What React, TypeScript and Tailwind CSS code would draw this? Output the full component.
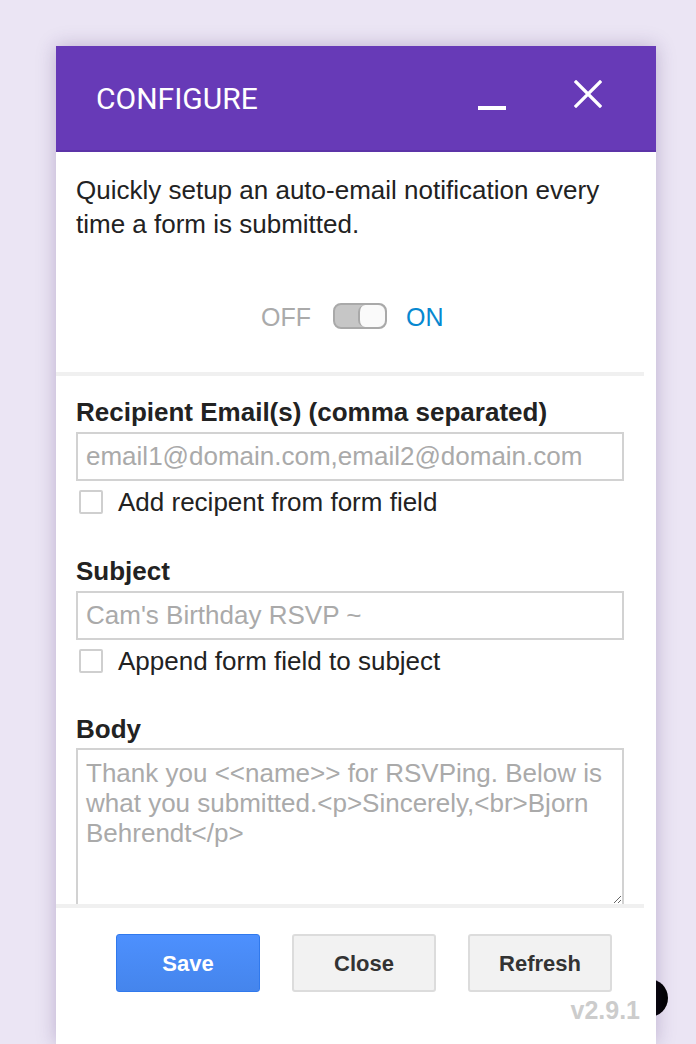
import React from "react";

function Field({
  label,
  placeholder,
  checkLabel,
  first = false,
}: {
  label: string;
  placeholder: string;
  checkLabel: string;
  first?: boolean;
}) {
  return (
    <div className={first ? "" : "mt-[39px]"}>
      <div className="text-[26px] leading-[30px] font-bold text-[#222]">{label}</div>
      <input
        readOnly
        placeholder={placeholder}
        className="mt-[5px] block w-[548px] h-[49px] border-2 border-[#d2d2d2] px-[8px] text-[26px] text-[#222] placeholder:text-[#aaa] outline-none"
      />
      <div className="mt-[6px] h-[30px] flex items-center">
        <div className="ml-[3px] w-[24px] h-[24px] border-2 border-[#cfcfcf] rounded-[2px] bg-white" />
        <span className="ml-[15px] text-[26px] leading-[30px] text-[#222]">{checkLabel}</span>
      </div>
    </div>
  );
}

export default function App() {
  return (
    <div className="relative min-h-screen overflow-hidden bg-[#ebe5f4] font-['Liberation_Sans',Arial,sans-serif]">
      {/* dark dot peeking out from behind the panel */}
      <div className="absolute left-[630px] top-[979px] w-[38px] h-[38px] rounded-full bg-black" />

      <div className="pt-[46px] pl-[56px]">
        <div className="relative z-10 w-[600px] h-[998px] bg-white shadow-[0_0_18px_rgba(70,40,110,0.28)] flex flex-col">
          <div className="h-[106px] shrink-0 bg-[#673ab7] border-b-2 border-[#5c34a8] flex items-center pl-[40px] pr-[54px]">
            <h1 className="font-['Roboto',sans-serif] text-[30px] text-white">CONFIGURE</h1>
            <div className="ml-auto flex items-center">
              <div className="mt-[20px] w-[28px] h-[4px] bg-white" />
              <svg className="ml-[68px] mb-[9px]" width="28" height="28" viewBox="0 0 28 28">
                <path d="M2 2 L26 26 M26 2 L2 26" stroke="white" strokeWidth="3.2" strokeLinecap="square" />
              </svg>
            </div>
          </div>

          <div className="h-[752px] w-[588px] shrink-0 overflow-hidden">
            <p className="px-[20px] pt-[21px] text-[26px] leading-[34px] text-[#222]">
              Quickly setup an auto-email notification every time a form is submitted.
            </p>

            <div className="mt-[62px] h-[26px] flex items-center pl-[205px]">
              <span className="mt-[3px] text-[25px] text-[#aaa]">OFF</span>
              <div className="ml-[22px] w-[54px] h-[26px] rounded-[8px] border-2 border-[#a9a9a9] bg-[#c6c6c6] flex justify-end">
                <div className="w-[27px] h-full rounded-[7px] border-l-2 border-[#a9a9a9] bg-[#fafafa]" />
              </div>
              <span className="ml-[19px] mt-[3px] text-[25px] text-[#0788d0]">ON</span>
            </div>

            <div className="mt-[43px] h-[4px] bg-[#f0f0f0]" />

            <div className="px-[20px] pt-[21px]">
              <Field
                first
                label="Recipient Email(s) (comma separated)"
                placeholder="email1@domain.com,email2@domain.com"
                checkLabel="Add recipent from form field"
              />
              <Field
                label="Subject"
                placeholder="Cam's Birthday RSVP ~"
                checkLabel="Append form field to subject"
              />
              <div className="mt-[38px]">
                <div className="text-[26px] leading-[30px] font-bold text-[#222]">Body</div>
                <textarea
                  readOnly
                  placeholder="Thank you <<name>> for RSVPing. Below is what you submitted.<p>Sincerely,<br>Bjorn Behrendt</p>"
                  className="mt-[4px] block w-[548px] h-[158px] border-2 border-[#d2d2d2] px-[8px] pt-[8px] text-[26px] leading-[30px] text-[#222] placeholder:text-[#aaa] outline-none"
                />
              </div>
            </div>
          </div>

          <div className="w-[588px] h-[4px] bg-[#f0f0f0]" />
          <div className="pt-[26px] pl-[60px] flex gap-[32px]">
            <button className="w-[144px] h-[58px] rounded-[3px] border border-[#3079ed] bg-gradient-to-b from-[#4d90fe] to-[#4585ec] text-[22px] font-bold text-white">
              Save
            </button>
            <button className="w-[144px] h-[58px] rounded-[3px] border-2 border-[#dcdcdc] bg-[#f2f2f2] text-[22px] font-bold text-[#333]">
              Close
            </button>
            <button className="w-[144px] h-[58px] rounded-[3px] border-2 border-[#dcdcdc] bg-[#f2f2f2] text-[22px] font-bold text-[#333]">
              Refresh
            </button>
          </div>
          <div className="mt-[4px] pr-[16px] text-right text-[25px] leading-[28px] font-bold text-[#cccccc]">v2.9.1</div>
        </div>
      </div>
    </div>
  );
}
